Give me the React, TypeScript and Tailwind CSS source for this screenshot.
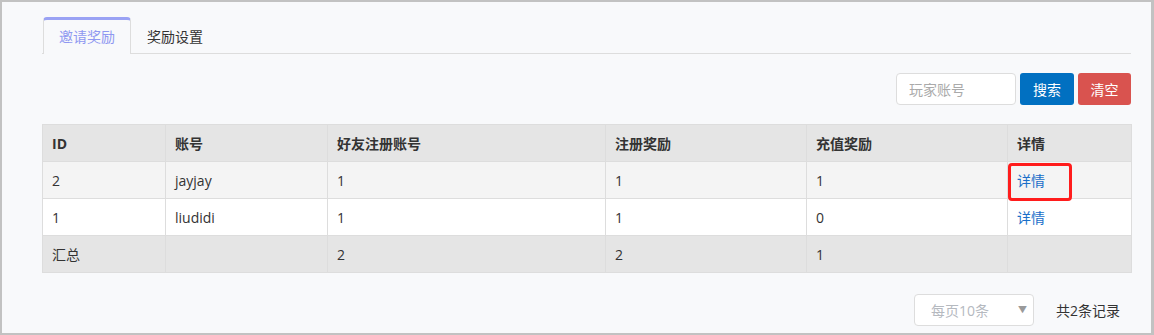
import { useState } from "react";

type Row = { id: string; account: string; friends: string; reg: string; pay: string };

const rows: Row[] = [
  { id: "2", account: "jayjay", friends: "1", reg: "1", pay: "1" },
  { id: "1", account: "liudidi", friends: "1", reg: "1", pay: "0" },
];

const cols = ["ID", "账号", "好友注册账号", "注册奖励", "充值奖励", "详情"];
const widths = ["w-[123px]", "w-[162px]", "w-[278px]", "w-[201px]", "w-[201px]", "w-[124px]"];

const font = { fontFamily: '"Open Sans", "Noto Sans CJK SC", sans-serif' };

const App = () => {
  const [tab, setTab] = useState(0);

  return (
    <div
      className="w-[1154px] h-[335px] bg-[#f8f9fb] border-t-2 border-l-2 border-r-[3px] border-b-2 border-[#c2c2c2] pl-[40px] pr-[20px] pt-[15px] text-[14px] text-[#333]"
      style={font}
    >
      {/* tabs */}
      <div className="flex border-b border-[#dddddd] h-[37px]">
        {["邀请奖励", "奖励设置"].map((t, i) => (
          <button
            key={t}
            onClick={() => setTab(i)}
            className={`h-[37px] px-[15px] ml-px leading-[32px] ${
              tab === i
                ? "bg-[#f8f9fb] border-t-[3px] border-x border-t-[#9aa2f4] border-x-[#dddddd] rounded-t-[4px] text-[#8f98f1] -mb-px"
                : "pt-[3px] text-[#333]"
            }`}
          >
            {t}
          </button>
        ))}
      </div>

      {/* search */}
      <div className="flex justify-end gap-[4px] mt-[19px]">
        <input
          placeholder="玩家账号"
          className="w-[120px] h-[32px] border border-[#dddddd] rounded-[4px] bg-white px-[12px] placeholder:text-[#aaaaaa] outline-none"
        />
        <button className="w-[54px] h-[32px] rounded-[3px] bg-[#0170c1] text-white">搜索</button>
        <button className="w-[53px] h-[32px] rounded-[3px] bg-[#d9534f] text-white">清空</button>
      </div>

      {/* table */}
      <table className="mt-[19px] w-[1089px] border-collapse table-fixed">
        <thead>
          <tr className="bg-[#e5e5e5] h-[37px]">
            {cols.map((c, i) => (
              <th key={c} className={`${widths[i]} h-[37px] p-0 border border-[#dddddd] text-left font-bold px-[9px]`}>
                {c}
              </th>
            ))}
          </tr>
        </thead>
        <tbody>
          {rows.map((r, idx) => (
            <tr key={r.id} className={idx === 0 ? "bg-[#f4f4f4]" : "bg-white"}>
              <td className="h-[37px] border border-[#dddddd] px-[9px]">{r.id}</td>
              <td className="h-[37px] border border-[#dddddd] px-[9px]">{r.account}</td>
              <td className="h-[37px] border border-[#dddddd] px-[9px]">{r.friends}</td>
              <td className="h-[37px] border border-[#dddddd] px-[9px]">{r.reg}</td>
              <td className="h-[37px] border border-[#dddddd] px-[9px]">{r.pay}</td>
              <td className="h-[37px] border border-[#dddddd] px-[9px] relative">
                <a className="text-[#1a6fc9] cursor-pointer">详情</a>
                {idx === 0 && (
                  <span className="absolute left-0 top-[1px] w-[64px] h-[38px] border-[3px] border-[#ff1c1c] rounded-[4px] pointer-events-none" />
                )}
              </td>
            </tr>
          ))}
          <tr className="bg-[#e5e5e5]">
            <td className="h-[37px] border border-[#dddddd] px-[9px]">汇总</td>
            <td className="h-[37px] border border-[#dddddd] px-[9px]"></td>
            <td className="h-[37px] border border-[#dddddd] px-[9px]">2</td>
            <td className="h-[37px] border border-[#dddddd] px-[9px]">2</td>
            <td className="h-[37px] border border-[#dddddd] px-[9px]">1</td>
            <td className="h-[37px] border border-[#dddddd] px-[9px]"></td>
          </tr>
        </tbody>
      </table>

      {/* pager */}
      <div className="flex justify-end items-center mt-[21px] pr-[11px]">
        <div className="w-[120px] h-[32px] border border-[#dddddd] rounded-[4px] bg-white flex items-center justify-between pl-[16px] pr-[6px] text-[#b5b9bf]">
          <span>每页10条</span>
          <span className="text-[9px] text-[#9a9a9a]">▼</span>
        </div>
        <span className="ml-[22px] text-[#333]">共2条记录</span>
      </div>
    </div>
  );
};

export default App;
